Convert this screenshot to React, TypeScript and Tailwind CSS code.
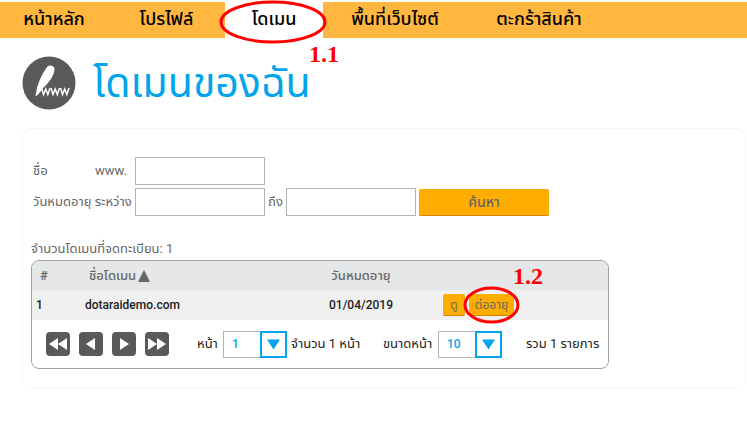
import { useState } from "react";

const navItems = [
  { label: "หน้าหลัก", width: "w-[108px]" },
  { label: "โปรไฟล์", width: "w-[117px]" },
  { label: "โดเมน", width: "w-[98px]" },
  { label: "พื้นที่เว็บไซต์", width: "w-36" },
  { label: "ตะกร้าสินค้า", width: "w-36" },
];

const domains = [{ id: 1, name: "dotaraidemo.com", expires: "01/04/2019" }];

const pagerButtons = [
  { label: "หน้าแรก", points: ["12,6 12,18 3,12", "21,6 21,18 12,12"] },
  { label: "ก่อนหน้า", points: ["16,6 16,18 7,12"] },
  { label: "ถัดไป", points: ["8,6 8,18 17,12"] },
  { label: "หน้าสุดท้าย", points: ["3,6 3,18 12,12", "12,6 12,18 21,12"] },
];

function Ring() {
  return (
    <svg className="absolute inset-0 h-full w-full overflow-visible" aria-hidden="true">
      <ellipse cx="50%" cy="50%" rx="50%" ry="50%" fill="none" stroke="#ff0000" strokeWidth="3" />
    </svg>
  );
}

function NavBar() {
  return (
    <nav className="mt-0.5 flex h-9 bg-[#ffb740] text-lg font-medium text-black">
      {navItems.map((item) => {
        const active = item.label === "โดเมน";
        return (
          <a
            key={item.label}
            href="#"
            aria-current={active ? "page" : undefined}
            className={`relative flex items-center justify-center pb-0.5 whitespace-nowrap ${item.width} ${active ? "bg-white" : ""}`}
          >
            {item.label}
            {active && (
              <span className="pointer-events-none absolute top-0 -right-0.5 -bottom-1 -left-1">
                <Ring />
                <span className="absolute top-10 left-22 font-['Liberation_Serif',serif] text-2xl leading-6 font-bold text-[#ff0000]">
                  1.1
                </span>
              </span>
            )}
          </a>
        );
      })}
    </nav>
  );
}

function DomainLogo() {
  return (
    <svg viewBox="0 0 54 54" className="size-[54px] shrink-0" aria-hidden="true">
      <circle cx="27" cy="27" r="26.5" fill="#58595b" />
      <path
        d="M13.500 39.500 L15 32 C17 25 21 16 25.500 10.500 C27.500 8.500 32.500 9.500 32.500 13 C32.500 19 27 27 21 32 L19 34 L16.500 38 Z"
        fill="#fff"
      />
      <path d="M14 39.500 L20 32.500" fill="none" stroke="#fff" strokeWidth="1.500" />
      <g fill="none" stroke="#fff" strokeWidth="1.500" strokeLinejoin="miter">
        <path d="M19.500 32 L21.500 38.500 L23.700 33 L25.800 38.500 L28 32" />
        <path d="M29 32 L31 38.500 L33.200 33 L35.300 38.500 L37.500 32" />
        <path d="M38.500 32 L40.500 38.500 L42.700 33 L44.800 38.500 L47 32" />
      </g>
    </svg>
  );
}

function DropDown({ label, options }: { label: string; options: string[] }) {
  const [value, setValue] = useState(options[0]);
  return (
    <span className="relative h-[27px] w-16 shrink-0">
      <select
        aria-label={label}
        value={value}
        onChange={(e) => setValue(e.target.value)}
        className="h-full w-full appearance-none border border-[#b3b3b3] bg-white pl-2 text-xs font-medium text-[#00a5ec]"
      >
        {options.map((o) => (
          <option key={o}>{o}</option>
        ))}
      </select>
      <svg viewBox="0 0 27 27" className="pointer-events-none absolute top-0 right-0 size-[27px]" aria-hidden="true">
        <rect x="1" y="1" width="25" height="25" fill="#fff" stroke="#00a5ec" strokeWidth="2" />
        <path d="M7 8.500 H20 L13.500 18.500 Z" fill="#00a5ec" />
      </svg>
    </span>
  );
}

function SearchForm() {
  const box = "h-7 w-[130px] border border-[#b3b3b3] bg-white px-1";
  return (
    <form className="flex flex-col gap-[3px] pl-0.5" onSubmit={(e) => e.preventDefault()}>
      <div className="flex items-center">
        <label htmlFor="name" className="flex w-[102px] whitespace-nowrap">
          <span className="w-[62px]">ชื่อ</span>
          <span>www.</span>
        </label>
        <input id="name" type="text" className={box} />
      </div>
      <div className="flex items-center">
        <label htmlFor="from" className="w-[102px] whitespace-nowrap">
          วันหมดอายุ ระหว่าง
        </label>
        <input id="from" type="text" className={box} />
        <label htmlFor="to" className="w-[21px] text-center whitespace-nowrap">
          ถึง
        </label>
        <input id="to" type="text" className={box} />
        <button
          type="submit"
          className="ml-[3px] h-[27px] w-[130px] rounded-xs border-b border-[#d98200] bg-[#ffad00] text-sm font-medium"
        >
          ค้นหา
        </button>
      </div>
    </form>
  );
}

function DomainTable() {
  const action = "h-[22px] rounded-xs border-b border-[#d98200] bg-[#ffad00] text-xs text-[#666666]";
  return (
    <div className="w-[578px] overflow-hidden rounded-lg border border-[#a0a0a2]">
      <table className="w-full table-fixed text-left">
        <colgroup>
          <col className="w-[53px]" />
          <col className="w-[214px]" />
          <col className="w-[124px]" />
          <col />
        </colgroup>
        <thead>
          <tr className="h-[29px] bg-[#e6e7e8]">
            <th className="pl-2 font-semibold">#</th>
            <th className="pl-1 font-medium whitespace-nowrap">
              ชื่อโดเมน
              <svg viewBox="0 0 12 12" className="ml-0.5 inline size-3" aria-hidden="true">
                <path d="M6 0 L12 12 H0 Z" fill="#666" />
              </svg>
            </th>
            <th className="text-center font-medium">วันหมดอายุ</th>
            <th aria-label="คำสั่ง" />
          </tr>
        </thead>
        <tbody>
          {domains.map((d) => (
            <tr key={d.id} className="h-[30px] bg-[#f0f0f0] text-xs font-medium text-[#222]">
              <td className="pl-1">{d.id}</td>
              <td>{d.name}</td>
              <td className="text-center">{d.expires}</td>
              <td>
                <div className="flex gap-1 pl-5 font-normal">
                  <button type="button" className={`${action} w-[22px]`}>
                    ดู
                  </button>
                  <span className="relative flex">
                    <button type="button" className={`${action} w-[45px] whitespace-nowrap`}>
                      ต่ออายุ
                    </button>
                    <span className="pointer-events-none absolute -top-1.5 -right-1 -bottom-1.5 -left-1">
                      <Ring />
                      <span className="absolute -top-6 left-12 font-['Liberation_Serif',serif] text-2xl leading-6 font-bold text-[#ff0000]">
                        1.2
                      </span>
                    </span>
                  </span>
                </div>
              </td>
            </tr>
          ))}
        </tbody>
      </table>
      <div className="flex h-12 items-center pl-3.5 whitespace-nowrap text-[#222]">
        <div className="flex gap-[9px]">
          {pagerButtons.map((b) => (
            <button key={b.label} type="button" aria-label={b.label} className="size-6 rounded-sm bg-[#58595b]">
              <svg viewBox="0 0 24 24" className="size-6" aria-hidden="true">
                {b.points.map((p) => (
                  <polygon key={p} points={p} fill="#fff" />
                ))}
              </svg>
            </button>
          ))}
        </div>
        <span className="ml-7 w-[26px]">หน้า</span>
        <DropDown label="หน้า" options={["1"]} />
        <span className="ml-1 w-[92px]">จำนวน 1 หน้า</span>
        <span className="w-[55px]">ขนาดหน้า</span>
        <DropDown label="ขนาดหน้า" options={["10", "20", "50"]} />
        <span className="ml-6">รวม 1 รายการ</span>
      </div>
    </div>
  );
}

export default function App() {
  return (
    <div className="flow-root min-h-screen bg-white font-[Roboto,'Noto_Sans_Thai','Noto_Sans',sans-serif] text-[13px] leading-5 text-[#666]">
      <NavBar />
      <header className="mt-[18px] flex items-center gap-[17px] pl-[22px]">
        <DomainLogo />
        <h1 className="text-[41px] leading-[54px] whitespace-nowrap text-[#00a5ec]">โดเมนของฉัน</h1>
      </header>
      <main className="mt-[18px] mr-px ml-[22px] rounded-[10px] border border-[#f7f7f7] px-2 pt-7 pb-[18px]">
        <SearchForm />
        <p className="mt-[23px] mb-px">จำนวนโดเมนที่จดทะเบียน: 1</p>
        <DomainTable />
      </main>
    </div>
  );
}
